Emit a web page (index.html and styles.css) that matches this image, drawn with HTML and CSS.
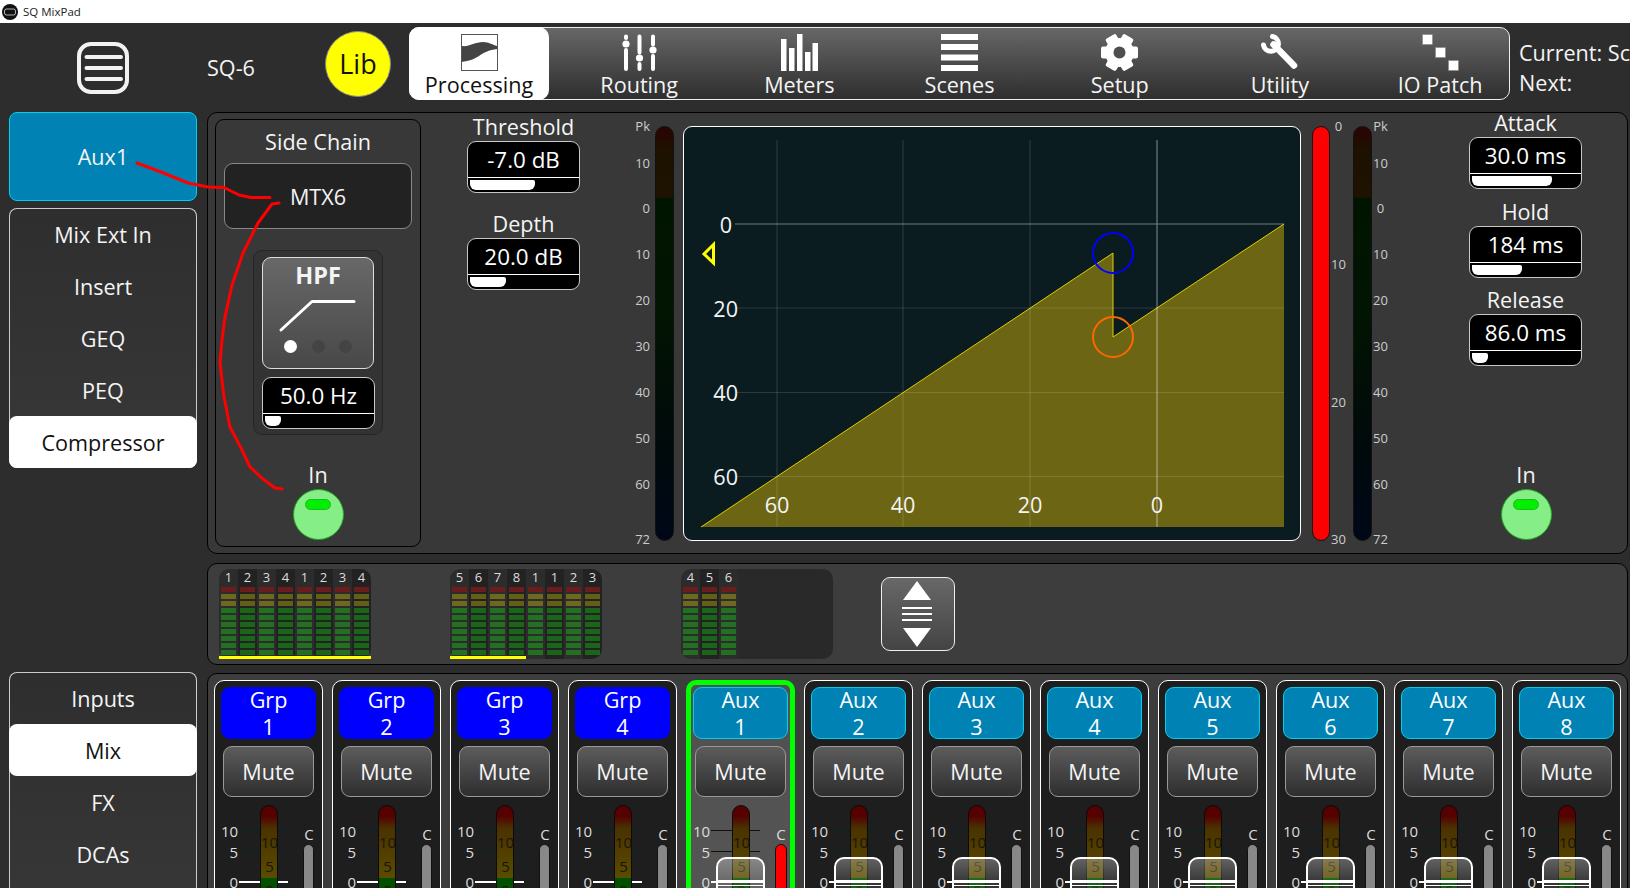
FILE: index.html
```html
<!DOCTYPE html>
<html lang="en">
<head>
<meta charset="utf-8">
<title>SQ MixPad</title>
<link rel="stylesheet" href="styles.css">
</head>
<body>
<div class="titlebar">
  <svg class="app-icon" viewBox="0 0 16 16"><circle cx="8" cy="8" r="8" fill="#111"/><rect x="2.5" y="5" width="11" height="6" rx="2" fill="none" stroke="#ddd" stroke-width=".8"/></svg>
  <span>SQ MixPad</span>
</div>

<header class="header">
  <svg class="burger" viewBox="0 0 52 52"><rect x="2" y="2" width="48" height="48" rx="12" fill="none" stroke="#f2f2f2" stroke-width="4"/><path d="M9.500 15H44M9.500 26H44M9.500 37H44" stroke="#f2f2f2" stroke-width="4" stroke-linecap="round"/></svg>
  <div class="desk-name">SQ-6</div>
  <div class="lib">Lib</div>
  <nav class="tabs">
    <div class="tab active">
      <svg class="tab-icon" viewBox="0 0 37 37"><rect x=".5" y=".5" width="36" height="36" fill="#fff" stroke="#555"/><path d="M1 12C8 13 14 8 22 8C28 8 32 11 36 12V15C28 16 24 18 18 22C12 26 6 27 1 28Z" fill="#444"/></svg>
      <span>Processing</span>
    </div>
    <div class="tab">
      <svg class="tab-icon" viewBox="0 0 37 37"><g stroke="#fff" stroke-width="4" stroke-linecap="round" fill="none"><path d="M5 2.500V4M5 16V35M18.500 2.500V18.500M18.500 30V35M32 2.500V10.500M32 22V35"/></g><g fill="#fff"><circle cx="5" cy="10" r="3.600"/><circle cx="18.500" cy="24" r="3.600"/><circle cx="32" cy="16" r="3.600"/></g></svg>
      <span>Routing</span>
    </div>
    <div class="tab">
      <svg class="tab-icon" viewBox="0 0 37 37" fill="#fff"><rect x="0" y="5" width="5.500" height="32"/><rect x="8" y="14" width="5.500" height="23"/><rect x="16" y="0" width="5.500" height="37"/><rect x="24" y="18" width="5.500" height="19"/><rect x="31.500" y="9" width="5.500" height="28"/></svg>
      <span>Meters</span>
    </div>
    <div class="tab">
      <svg class="tab-icon" viewBox="0 0 37 37" fill="#fff"><rect width="37" height="6"/><rect y="10" width="37" height="6"/><rect y="20.500" width="37" height="6"/><rect y="31" width="37" height="6"/></svg>
      <span>Scenes</span>
    </div>
    <div class="tab">
      <svg class="tab-icon" viewBox="-18.500 -18.500 37 37"><circle r="14.500" fill="#fff"/><g fill="#fff"><rect x="-6" y="-18.500" width="12" height="37" rx="2" transform="rotate(30)"/><rect x="-6" y="-18.500" width="12" height="37" rx="2" transform="rotate(90)"/><rect x="-6" y="-18.500" width="12" height="37" rx="2" transform="rotate(150)"/></g><circle r="6" fill="#4e4e4e"/></svg>
      <span>Setup</span>
    </div>
    <div class="tab">
      <svg class="tab-icon wide" viewBox="0 0 38 37"><path d="M12.500 10.500L33 31.500" stroke="#fff" stroke-width="6.500" stroke-linecap="round"/><path d="M11.500 2.500A7.500 7.500 0 1 1 2.500 11" fill="none" stroke="#fff" stroke-width="5" stroke-linecap="round"/></svg>
      <span>Utility</span>
    </div>
    <div class="tab">
      <svg class="tab-icon" viewBox="0 0 37 37" fill="#fff" stroke="#888" stroke-width=".6"><rect x=".5" y=".5" width="10" height="10"/><rect x="13.500" y="13.500" width="10" height="10"/><rect x="26.500" y="26.500" width="10" height="10"/></svg>
      <span>IO Patch</span>
    </div>
  </nav>
  <div class="scene-info">
    <div>Current: Scene 1</div>
    <div>Next:</div>
  </div>
</header>

<div class="workspace">
  <aside class="sidebar">
    <div class="channel-title">Aux1</div>
    <div class="list list-top">
      <div class="list-item">Mix Ext In</div>
      <div class="list-item">Insert</div>
      <div class="list-item">GEQ</div>
      <div class="list-item">PEQ</div>
      <div class="list-item on">Compressor</div>
    </div>
    <div class="list list-bottom">
      <div class="list-item">Inputs</div>
      <div class="list-item on">Mix</div>
      <div class="list-item">FX</div>
      <div class="list-item">DCAs</div>
      <div class="list-item">Other</div>
    </div>
  </aside>

  <main class="content">
    <section class="comp-panel">
      <div class="sidechain">
        <div class="sc-title">Side Chain</div>
        <div class="sc-source">MTX6</div>
        <div class="hpf-group">
          <div class="hpf">
            <div class="hpf-name">HPF</div>
            <svg class="hpf-curve" viewBox="0 0 112 50"><path d="M19 30L50 1.500H92" fill="none" stroke="#fff" stroke-width="3" stroke-linecap="round" stroke-linejoin="round"/></svg>
            <div class="hpf-dots"><i class="dot lit"></i><i class="dot"></i><i class="dot"></i></div>
          </div>
          <div class="val hpf-val"><div class="val-text">50.0 Hz</div><div class="val-bar" style="width:16px"></div></div>
        </div>
        <div class="in-group in-side">
          <div class="in-label">In</div>
          <div class="in-btn"><i class="in-led"></i></div>
        </div>
      </div>

      <div class="params params-mid">
        <div class="label">Threshold</div>
        <div class="val"><div class="val-text">-7.0 dB</div><div class="val-bar" style="width:65px"></div></div>
        <div class="label gap17">Depth</div>
        <div class="val"><div class="val-text">20.0 dB</div><div class="val-bar" style="width:36px"></div></div>
      </div>

      <div class="scale scale-left">
        <span>Pk</span><span>10</span><span>0</span><span>10</span><span>20</span><span>30</span><span>40</span><span>50</span><span>60</span><span>72</span>
      </div>
      <div class="bar-meter dark-meter left-meter"></div>

      <div class="graph">
        <svg viewBox="684 127 616 413" width="616" height="413">
          <path d="M701 527L1113 253V337L1284 224V527Z" fill="#6c6614"/>
          <path d="M701 527L1113 253V337L1284 224" fill="none" stroke="#e0cc00" stroke-width="1"/>
          <g stroke="#fff" stroke-opacity=".13" stroke-width="1.200">
            <path d="M777 140V527M903 140V527M1030 140V527"/>
            <path d="M737 308H1284M737 392.500H1284M737 476.500H1284"/>
          </g>
          <g stroke="#fff" stroke-opacity=".42" stroke-width="1.200">
            <path d="M1157 140V527M735 224H1284"/>
          </g>
          <circle cx="1113" cy="253" r="20" fill="none" stroke="#0000ff" stroke-width="2"/>
          <circle cx="1113" cy="337" r="20" fill="none" stroke="#ff6600" stroke-width="2"/>
          <path d="M713.500 244.500V263L704 254Z" fill="none" stroke="#ffff00" stroke-width="3"/>
          <g class="graph-text" text-anchor="end">
            <text x="732" y="233">0</text>
            <text x="738" y="317">20</text>
            <text x="738" y="401">40</text>
            <text x="738" y="485">60</text>
          </g>
          <g class="graph-text" text-anchor="middle">
            <text x="777" y="513">60</text>
            <text x="903" y="513">40</text>
            <text x="1030" y="513">20</text>
            <text x="1157" y="513">0</text>
          </g>
        </svg>
      </div>

      <div class="bar-meter red-meter"></div>
      <div class="scale scale-red"><span>0</span><span>10</span><span>20</span><span>30</span></div>
      <div class="bar-meter dark-meter right-meter"></div>
      <div class="scale scale-right">
        <span>Pk</span><span>10</span><span>0</span><span>10</span><span>20</span><span>30</span><span>40</span><span>50</span><span>60</span><span>72</span>
      </div>

      <div class="params params-right">
        <div class="label">Attack</div>
        <div class="val"><div class="val-text">30.0 ms</div><div class="val-bar" style="width:80px"></div></div>
        <div class="label gap9">Hold</div>
        <div class="val"><div class="val-text">184 ms</div><div class="val-bar" style="width:50px"></div></div>
        <div class="label gap8">Release</div>
        <div class="val"><div class="val-text">86.0 ms</div><div class="val-bar" style="width:16px"></div></div>
        <div class="in-group in-right">
          <div class="in-label">In</div>
          <div class="in-btn"><i class="in-led"></i></div>
        </div>
      </div>
    </section>

    <section class="meter-panel">
      <div class="group">
        <div class="strips">
          <div class="mstrip"><b>1</b><i class="leds"></i></div><div class="mstrip alt"><b>2</b><i class="leds"></i></div><div class="mstrip"><b>3</b><i class="leds"></i></div><div class="mstrip alt"><b>4</b><i class="leds"></i></div><div class="mstrip"><b>1</b><i class="leds"></i></div><div class="mstrip alt"><b>2</b><i class="leds"></i></div><div class="mstrip"><b>3</b><i class="leds"></i></div><div class="mstrip alt"><b>4</b><i class="leds"></i></div>
        </div>
        <div class="underline full"></div>
      </div>
      <div class="group">
        <div class="strips">
          <div class="mstrip"><b>5</b><i class="leds"></i></div><div class="mstrip alt"><b>6</b><i class="leds"></i></div><div class="mstrip"><b>7</b><i class="leds"></i></div><div class="mstrip alt"><b>8</b><i class="leds"></i></div><div class="mstrip"><b>1</b><i class="leds"></i></div><div class="mstrip alt"><b>1</b><i class="leds"></i></div><div class="mstrip"><b>2</b><i class="leds"></i></div><div class="mstrip alt"><b>3</b><i class="leds"></i></div>
        </div>
        <div class="underline half"></div>
      </div>
      <div class="group">
        <div class="strips">
          <div class="mstrip"><b>4</b><i class="leds"></i></div><div class="mstrip alt"><b>5</b><i class="leds"></i></div><div class="mstrip"><b>6</b><i class="leds"></i></div><div class="mstrip-empty"></div>
        </div>
      </div>
      <div class="updown">
        <svg viewBox="0 0 72 72"><path d="M35 3L49 22H21Z" fill="#fff"/><path d="M20 30H50M20 36H50M20 42H50" stroke="#fff" stroke-width="2.200"/><path d="M21 50H49L35 69Z" fill="#fff"/></svg>
      </div>
    </section>

    <section class="channels">
      <div class="strip"><div class="name grp">Grp<br>1</div><div class="mute">Mute</div><div class="fader"><i class="tick t10"></i><i class="tick t5"></i><i class="tick t0"></i><div class="f-scale"><span>10</span><span>5</span><span>0</span></div><div class="f-meter"><span>10</span><span>5</span><span>0</span></div><div class="clip"><span>C</span><i class="clip-bar"></i></div></div></div>
      <div class="strip"><div class="name grp">Grp<br>2</div><div class="mute">Mute</div><div class="fader"><i class="tick t10"></i><i class="tick t5"></i><i class="tick t0"></i><div class="f-scale"><span>10</span><span>5</span><span>0</span></div><div class="f-meter"><span>10</span><span>5</span><span>0</span></div><div class="clip"><span>C</span><i class="clip-bar"></i></div></div></div>
      <div class="strip"><div class="name grp">Grp<br>3</div><div class="mute">Mute</div><div class="fader"><i class="tick t10"></i><i class="tick t5"></i><i class="tick t0"></i><div class="f-scale"><span>10</span><span>5</span><span>0</span></div><div class="f-meter"><span>10</span><span>5</span><span>0</span></div><div class="clip"><span>C</span><i class="clip-bar"></i></div></div></div>
      <div class="strip"><div class="name grp">Grp<br>4</div><div class="mute">Mute</div><div class="fader"><i class="tick t10"></i><i class="tick t5"></i><i class="tick t0"></i><div class="f-scale"><span>10</span><span>5</span><span>0</span></div><div class="f-meter"><span>10</span><span>5</span><span>0</span></div><div class="clip"><span>C</span><i class="clip-bar"></i></div></div></div>
      <div class="strip sel"><div class="name aux">Aux<br>1</div><div class="mute">Mute</div><div class="fader"><i class="tick t10"></i><i class="tick t5"></i><i class="tick t0"></i><div class="f-scale"><span>10</span><span>5</span><span>0</span></div><div class="f-meter"><span>10</span><span>5</span><span>0</span></div><div class="clip"><span>C</span><i class="clip-bar red"></i></div><i class="cap"></i></div></div>
      <div class="strip"><div class="name aux">Aux<br>2</div><div class="mute">Mute</div><div class="fader"><i class="tick t10"></i><i class="tick t5"></i><i class="tick t0"></i><div class="f-scale"><span>10</span><span>5</span><span>0</span></div><div class="f-meter"><span>10</span><span>5</span><span>0</span></div><div class="clip"><span>C</span><i class="clip-bar"></i></div><i class="cap"></i></div></div>
      <div class="strip"><div class="name aux">Aux<br>3</div><div class="mute">Mute</div><div class="fader"><i class="tick t10"></i><i class="tick t5"></i><i class="tick t0"></i><div class="f-scale"><span>10</span><span>5</span><span>0</span></div><div class="f-meter"><span>10</span><span>5</span><span>0</span></div><div class="clip"><span>C</span><i class="clip-bar"></i></div><i class="cap"></i></div></div>
      <div class="strip"><div class="name aux">Aux<br>4</div><div class="mute">Mute</div><div class="fader"><i class="tick t10"></i><i class="tick t5"></i><i class="tick t0"></i><div class="f-scale"><span>10</span><span>5</span><span>0</span></div><div class="f-meter"><span>10</span><span>5</span><span>0</span></div><div class="clip"><span>C</span><i class="clip-bar"></i></div><i class="cap"></i></div></div>
      <div class="strip"><div class="name aux">Aux<br>5</div><div class="mute">Mute</div><div class="fader"><i class="tick t10"></i><i class="tick t5"></i><i class="tick t0"></i><div class="f-scale"><span>10</span><span>5</span><span>0</span></div><div class="f-meter"><span>10</span><span>5</span><span>0</span></div><div class="clip"><span>C</span><i class="clip-bar"></i></div><i class="cap"></i></div></div>
      <div class="strip"><div class="name aux">Aux<br>6</div><div class="mute">Mute</div><div class="fader"><i class="tick t10"></i><i class="tick t5"></i><i class="tick t0"></i><div class="f-scale"><span>10</span><span>5</span><span>0</span></div><div class="f-meter"><span>10</span><span>5</span><span>0</span></div><div class="clip"><span>C</span><i class="clip-bar"></i></div><i class="cap"></i></div></div>
      <div class="strip"><div class="name aux">Aux<br>7</div><div class="mute">Mute</div><div class="fader"><i class="tick t10"></i><i class="tick t5"></i><i class="tick t0"></i><div class="f-scale"><span>10</span><span>5</span><span>0</span></div><div class="f-meter"><span>10</span><span>5</span><span>0</span></div><div class="clip"><span>C</span><i class="clip-bar"></i></div><i class="cap"></i></div></div>
      <div class="strip"><div class="name aux">Aux<br>8</div><div class="mute">Mute</div><div class="fader"><i class="tick t10"></i><i class="tick t5"></i><i class="tick t0"></i><div class="f-scale"><span>10</span><span>5</span><span>0</span></div><div class="f-meter"><span>10</span><span>5</span><span>0</span></div><div class="clip"><span>C</span><i class="clip-bar"></i></div><i class="cap"></i></div></div>
    </section>
  </main>
</div>

<svg class="scribble" viewBox="0 0 1630 888">
  <path d="M137 163L145 166L161 172L188 183L208 187L224 187.500L239 195L251 197.500L270 197.500"/>
  <path d="M279 203L272 204L258 223L243 253L232 285L225 317L222 340L220 363L224 397L230 427L242 450L250 467L263 479L275 488L282 489"/>
</svg>
</body>
</html>
```
FILE: styles.css
```css
* { box-sizing: border-box; }
html, body { margin: 0; height: 100%; }
body {
  width: 1630px;
  height: 888px;
  overflow: hidden;
  position: relative;
  background: #2d2d2d;
  color: #f4f4f4;
  font-family: "Open Sans", "Noto Sans", sans-serif;
  font-size: 21.600px;
}
i { display: block; }

.titlebar {
  height: 23px;
  background: #fff;
  color: #222;
  font-size: 11.500px;
  display: flex;
  align-items: center;
  gap: 5px;
  padding-left: 2px;
}
.app-icon { width: 16px; height: 16px; }

.header { height: 89px; display: flex; align-items: flex-start; }
.burger { width: 52px; height: 52px; margin: 19px 0 0 77px; flex: none; }
.desk-name { width: 118px; margin: 30px 0 0 78px; line-height: 30px; flex: none; }
.lib {
  width: 66px; height: 66px; margin-top: 8px; flex: none;
  border-radius: 50%;
  background: #ffff00;
  border: 1px solid #888;
  color: #111;
  font-size: 27px;
  padding-bottom: 2px;
  display: flex; align-items: center; justify-content: center;
}
.tabs {
  width: 1101px; height: 73px; margin: 4px 0 0 18px; flex: none;
  display: flex; gap: 20.200px;
  border: 1px solid #eee;
  border-radius: 10px;
  background: linear-gradient(#676767, #2e2e2e);
}
.tab {
  width: 140px; flex: none;
  display: flex; flex-direction: column; align-items: center;
  padding-top: 6px;
}
.tab span { line-height: 26px; margin-top: 1px; }
.tab-icon { width: 37px; height: 37px; display: block; flex: none; }
.tab-icon.wide { width: 38px; }
.tab.active {
  background: #fff; color: #111;
  border-radius: 10px;
  margin: -1px 0 -1px -1px;
  padding-top: 7px;
}
.scene-info { margin: 15px 0 0 9px; line-height: 30px; white-space: nowrap; }

.workspace { display: flex; height: 776px; overflow: hidden; }
.sidebar { width: 207px; flex: none; padding-left: 9px; }
.channel-title {
  width: 188px; height: 89px;
  background: #0082b4;
  border: 1px solid #00d0f0;
  border-radius: 8px;
  display: flex; align-items: center; justify-content: center;
}
.list {
  width: 188px;
  border-radius: 8px;
  background: linear-gradient(#2e2e2e, #383838);
  box-shadow: inset 0 0 0 1px #ccc;
}
.list-top { margin-top: 7px; }
.list-bottom { margin-top: 204px; }
.list-item { height: 52px; display: flex; align-items: center; justify-content: center; }
.list-item.on { background: #fff; color: #111; border-radius: 8px; }

.content { width: 1421px; flex: none; }

.comp-panel {
  height: 442px;
  border: 1px solid #000;
  border-radius: 10px;
  background: #383838;
  display: flex;
  align-items: flex-start;
}
.sidechain {
  width: 206px; height: 428px; margin: 6px 0 0 7px; flex: none;
  border: 1px solid #000;
  border-radius: 9px;
  background: #383838;
  display: flex; flex-direction: column; align-items: center;
}
.sc-title { line-height: 28px; margin-top: 8px; margin-bottom: -1px; }
.sc-source {
  width: 188px; height: 66px; margin-top: 8px;
  background: #222;
  border: 1px solid #888;
  border-radius: 9px;
  display: flex; align-items: center; justify-content: center;
}
.hpf-group {
  width: 130px; height: 185px; margin-top: 21px;
  background: #333;
  border: 1px solid #262626;
  border-radius: 9px;
  padding: 6px 8px;
}
.hpf {
  width: 112px; height: 112px;
  background: linear-gradient(#686868, #484848);
  border: 1px solid #ddd;
  border-radius: 9px;
  display: flex; flex-direction: column; align-items: center;
}
.hpf-name { font-weight: 700; font-size: 23.500px; line-height: 30px; margin-top: 2px; }
.hpf-curve { width: 112px; height: 50px; display: block; margin-top: 10px; margin-bottom: -9px; }
.hpf-dots { display: flex; gap: 14.500px; margin-top: -1px; }
.dot { width: 13px; height: 13px; border-radius: 50%; background: #444; }
.dot.lit { background: #fff; }
.hpf-val { margin-top: 8px; width: 112px; height: 51px; }

.val {
  width: 113px; height: 52px;
  background: #000;
  border: 1px solid #c8c8c8;
  border-radius: 9px;
  overflow: hidden;
}
.val-text {
  height: 36px;
  border-bottom: 1px solid #fff;
  display: flex; align-items: center; justify-content: center;
  line-height: 36px;
  font-size: 22.400px;
  padding-top: 1px;
  color: #fff;
}
.val-bar { height: 10px; margin: 2px 0 0 2px; background: #fff; border-radius: 0 2px 6px 6px; }

.params { width: 113px; flex: none; }
.params-mid { margin-left: 46px; }
.params-right {
  margin: -4px 0 0 81px;
  height: 444px;
  display: flex; flex-direction: column;
}
.label { line-height: 27px; padding-bottom: 1px; text-align: center; }
.gap17 { margin-top: 17px; }
.gap9 { margin-top: 9px; }
.gap8 { margin-top: 8px; }

.in-group { display: flex; flex-direction: column; align-items: center; }
.in-side { margin-top: auto; margin-bottom: 6px; }
.in-right { margin-top: auto; margin-bottom: 13px; margin-left: 1px; }
.in-label { line-height: 28px; padding-top: 1px; }
.in-btn {
  width: 51px; height: 51px;
  border-radius: 50%;
  background: #86ee86;
  border: 1px solid #22a522;
  padding-top: 9px;
}
.in-led {
  width: 26px; height: 11px; margin: 0 auto;
  border-radius: 6px;
  background: #00f000;
  border: 1px solid #1fb81f;
}

.scale {
  display: grid;
  margin-top: 6px;
  flex: none;
  font-size: 13px;
  line-height: 14px;
  color: #ccc;
  grid-template-rows: 37px 45px 46px 46px 46px 46px 46px 46px 55px 14px;
}
.scale-left { width: 30px; margin-left: 40px; text-align: right; }
.scale-right { width: 15px; margin-left: 1px; text-align: center; }
.scale-red { width: 14px; margin-left: 1px; text-align: center; grid-template-rows: 138px 138px 137px 14px; }

.bar-meter {
  width: 19px; height: 415px; margin-top: 13px; flex: none;
  border-radius: 10px;
  border: 1px solid #111;
}
.dark-meter {
  background: linear-gradient(#2b0303 0, #1d1200 6%, #1d1300 17%, #001500 17.300%, #021402 45%, #00090c 80%, #000818 100%);
}
.left-meter { margin-left: 5px; }
.right-meter { margin-left: 8px; }
.red-meter { width: 18px; margin-left: 11px; background: #ff0000; }
.graph {
  width: 618px; height: 415px; margin: 13px 0 0 9px; flex: none;
  background: #0a1c20;
  border: 1px solid #fff;
  border-radius: 9px;
  overflow: hidden;
}
.graph svg { display: block; }
.graph-text { font-size: 21.600px; fill: #f4f4f4; }

.meter-panel {
  height: 102px; margin-top: 9px;
  border: 1px solid #000;
  border-radius: 10px;
  background: #3d3d3d;
  display: flex;
  padding: 5px 0 0 11px;
}
.group { position: relative; width: 152px; height: 90px; margin-right: 79px; flex: none; }
.strips { display: flex; height: 90px; border-radius: 10px; overflow: hidden; }
.mstrip { width: 19px; flex: none; background: #2c2c2c; display: flex; flex-direction: column; align-items: center; }
.mstrip.alt { background: #222; }
.mstrip b { font-weight: 400; font-size: 13px; line-height: 16px; height: 18px; color: #ddd; }
.leds {
  width: 15px; height: 68px;
  --g: #237023; --y: #6e691e; --r: #6b1c1c;
  background: linear-gradient(
    var(--r) 0 5px, transparent 5px 7px,
    var(--y) 7px 12px, transparent 12px 14px,
    var(--y) 14px 19px, transparent 19px 21px,
    var(--g) 21px 26px, transparent 26px 28px,
    var(--g) 28px 33px, transparent 33px 35px,
    var(--g) 35px 40px, transparent 40px 42px,
    var(--g) 42px 47px, transparent 47px 49px,
    var(--g) 49px 54px, transparent 54px 56px,
    var(--g) 56px 61px, transparent 61px 63px,
    var(--g) 63px 68px);
}
.alt .leds { --g: #1a651a; --y: #645f17; }
.mstrip-empty { flex: 1; background: #282928; }
.underline { position: absolute; left: 0; bottom: 0; height: 3px; background: #ffff00; }
.underline.full { width: 152px; }
.underline.half { width: 76px; }
.updown {
  width: 74px; height: 74px; margin: 8px 0 0 -31px;
  border: 1px solid #eee;
  border-radius: 9px;
  background: linear-gradient(#686868, #444);
}
.updown svg { display: block; width: 72px; height: 72px; }

.channels {
  height: 240px; margin-top: 8px;
  border: 1px solid #000;
  border-radius: 10px;
  background: #3d3d3d;
  display: flex;
  gap: 9px;
  padding: 6px;
}
.strip {
  width: 109px; height: 228px; flex: none;
  background: #1e1e1e;
  border: 1px solid #fff;
  border-radius: 10px;
  padding: 6px;
}
.strip.sel {
  background: linear-gradient(#505050, #555);
  border: 5px solid #00ff00;
  padding: 2px;
}
.name {
  display: flow-root;
  width: 95px; height: 52px;
  border-radius: 9px;
  text-align: center;
  line-height: 26.500px;
  color: #fff;
}
.grp { background: #0000ff; }
.aux { background: #0082b4; border: 1px solid #00d0f0; }
.aux::before { content: ""; display: block; margin-top: -1px; }
.mute {
  width: 91px; height: 51px; margin: 7px 0 0 2px;
  border: 1px solid #999;
  border-radius: 9px;
  background: linear-gradient(#5c5c5c, #2e2e2e);
  display: flex; align-items: center; justify-content: center;
}
.fader { position: relative; display: flex; margin-top: 8px; height: 83px; }
.tick { position: absolute; left: 18px; width: 49px; height: 1px; background: #0c2428; }
.sel .tick { background: #111; }
.t10 { top: 25px; }
.t5 { top: 46px; }
.tick.t0 { top: 76px; height: 2px; background: #fff; }
.f-scale {
  width: 16px; flex: none;
  padding-top: 18px;
  display: grid; grid-template-rows: 21px 30px 16px;
  justify-items: end;
  font-size: 15px; line-height: 16px;
  color: #ddd;
}
.f-meter {
  position: relative;
  width: 18px; height: 100px; margin-left: 23px; flex: none;
  border: 1px solid #0b0b0b;
  border-radius: 9px 9px 0 0;
  background: linear-gradient(#560000 0, #560000 10px, #4a3200 22px, #5a4c00 72px, #005000 72.500px);
  display: grid; grid-template-rows: 24px 24px 22px;
  padding-top: 28px;
  justify-items: center;
  font-size: 15px; line-height: 16px;
  color: #1a1708;
}
.clip { width: 12px; margin-left: 25px; flex: none; text-align: center; font-size: 15px; line-height: 16px; color: #ddd; padding-top: 21px; }
.clip span { display: block; margin: 0 -4px; }
.clip-bar { width: 11px; height: 60px; margin: 2px 0 0 0; background: #888; border: 1px solid #111; border-radius: 6px 6px 0 0; }
.clip-bar.red { width: 12px; background: #ff0000; }
.cap {
  position: absolute; left: 23px; top: 52px;
  width: 49px; height: 60px;
  border: 2px solid #fff;
  border-radius: 10px;
  background: linear-gradient(rgba(255,255,255,.3), rgba(255,255,255,.1) 24px);
}
.cap::after {
  content: "";
  position: absolute; left: -2px; right: -2px; top: 21px;
  height: 6px;
  background: linear-gradient(#fff 0 3px, transparent 3px 5px, #fff 5px);
}

.scribble { position: absolute; left: 0; top: 0; width: 1630px; height: 888px; pointer-events: none; }
.scribble path { fill: none; stroke: #ff0000; stroke-width: 3; stroke-linecap: round; stroke-linejoin: round; }
```
